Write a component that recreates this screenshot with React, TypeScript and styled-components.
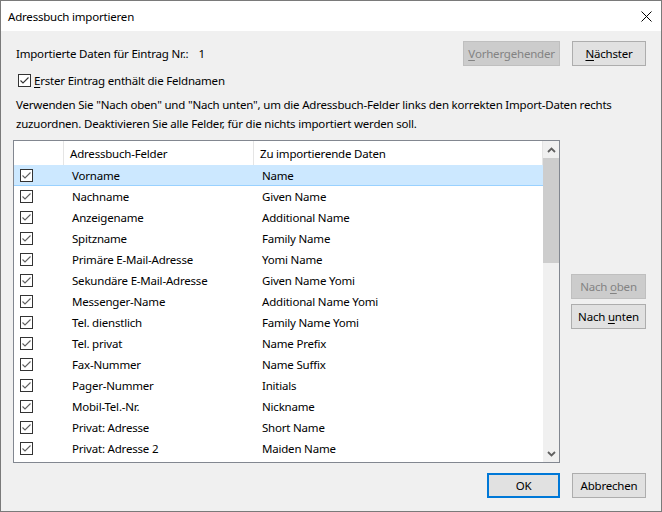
import React from "react";
import styled, { createGlobalStyle } from "styled-components";

const GlobalStyle = createGlobalStyle`
  html, body { margin: 0; padding: 0; background: #ffffff; }
  body { font-family: "Noto Sans", "Open Sans", sans-serif; font-size: 11.5px; letter-spacing: -0.2px; color: #000; }
  * { box-sizing: border-box; }
`;

const Window = styled.div`
  width: 662px;
  height: 512px;
  border: 1px solid #7a7a7a;
  display: flex;
  flex-direction: column;
  overflow: hidden;
`;

const TitleBar = styled.div`
  height: 30px;
  background: #ffffff;
  display: flex;
  align-items: center;
  justify-content: space-between;
  padding: 0 9px 0 7px;
  flex-shrink: 0;
`;

const Title = styled.span`
  color: #000;
`;

const Body = styled.div`
  flex: 1;
  background: #f0f0f0;
  padding: 10px 15px 0 12px;
  display: flex;
  flex-direction: column;
`;

const TopRow = styled.div`
  height: 25px;
  display: flex;
  align-items: center;
`;

const Label = styled.span`
  margin-left: 3px;
  white-space: nowrap;
`;

const Value = styled.span`
  margin-left: 10px;
`;

const Spacer = styled.div`
  flex: 1;
`;

const Button = styled.button<{ $w: number; $disabled?: boolean; $default?: boolean }>`
  width: ${(p) => p.$w}px;
  height: 25px;
  padding: 0;
  font-family: inherit;
  font-size: 11.5px;
  letter-spacing: -0.2px;
  color: ${(p) => (p.$disabled ? "#838383" : "#000")};
  background: ${(p) => (p.$disabled ? "#cccccc" : "#e1e1e1")};
  border: ${(p) =>
    p.$default ? "2px solid #0078d7" : p.$disabled ? "1px solid #bfbfbf" : "1px solid #adadad"};
  display: flex;
  align-items: center;
  justify-content: center;
  cursor: default;
`;

const ButtonGroup = styled.div<{ $gap: number }>`
  display: flex;
  gap: ${(p) => p.$gap}px;
`;

const U = styled.span`
  text-decoration: underline;
  text-underline-offset: 2px;
`;

const CheckRow = styled.div`
  margin-top: 7px;
  height: 14px;
  display: flex;
  align-items: center;
  padding-left: 5px;
  gap: 3px;
`;

const Box = styled.span`
  width: 13px;
  height: 13px;
  border: 1px solid #333333;
  background: #ffffff;
  display: inline-flex;
  align-items: center;
  justify-content: center;
  flex-shrink: 0;
`;

const Paragraph = styled.p`
  margin: 8px 0 0 3px;
  line-height: 19px;
`;

const MainRow = styled.div`
  margin-top: 7px;
  display: flex;
  gap: 11px;
`;

const ListBox = styled.div`
  width: 547px;
  height: 323px;
  border: 1px solid #828790;
  background: #ffffff;
  display: flex;
`;

const Table = styled.div`
  flex: 1;
  overflow: hidden;
  display: flex;
  flex-direction: column;
`;

const HeaderRow = styled.div`
  height: 24px;
  display: grid;
  grid-template-columns: 50px 190px 1fr;
  flex-shrink: 0;
  border-right: 1px solid #e5e5e5;
`;

const HeaderCell = styled.div`
  display: flex;
  align-items: center;
  padding-left: 6px;
  border-right: 1px solid #e5e5e5;
  &:last-child { border-right: none; }
`;

const Row = styled.div<{ $selected?: boolean }>`
  height: 21px;
  flex-shrink: 0;
  display: grid;
  grid-template-columns: 50px 190px 1fr;
  align-items: center;
  background: ${(p) => (p.$selected ? "#cce8ff" : "transparent")};
  border-bottom: 1px solid ${(p) => (p.$selected ? "#99d1ff" : "transparent")};
`;

const CheckCell = styled.div`
  padding-left: 6px;
  display: flex;
  align-items: center;
`;

const TextCell = styled.div`
  padding-left: 8px;
  white-space: nowrap;
  overflow: hidden;
  line-height: 19px;
`;

const ScrollBar = styled.div`
  width: 16px;
  background: #f0f0f0;
  display: flex;
  flex-direction: column;
  flex-shrink: 0;
`;

const Arrow = styled.div`
  height: 17px;
  display: flex;
  align-items: center;
  justify-content: center;
  flex-shrink: 0;
`;

const Track = styled.div`
  flex: 1;
  display: flex;
  flex-direction: column;
`;

const Thumb = styled.div`
  height: 105px;
  background: #cdcdcd;
`;

const SideColumn = styled.div`
  display: flex;
  flex-direction: column;
  gap: 5px;
  padding-top: 134px;
`;

const BottomRow = styled.div`
  margin-top: 10px;
  display: flex;
  justify-content: flex-end;
  gap: 12px;
`;

const Check = ({ color = "#5f5f5f" }: { color?: string }) => (
  <svg width="11" height="11" viewBox="0 0 11 11">
    <polyline points="1.5,5.5 4,8 9.5,2.5" fill="none" stroke={color} strokeWidth="1.1" />
  </svg>
);

const CheckBox = ({ color }: { color?: string }) => (
  <Box>
    <Check color={color} />
  </Box>
);

const rows: [string, string][] = [
  ["Vorname", "Name"],
  ["Nachname", "Given Name"],
  ["Anzeigename", "Additional Name"],
  ["Spitzname", "Family Name"],
  ["Primäre E-Mail-Adresse", "Yomi Name"],
  ["Sekundäre E-Mail-Adresse", "Given Name Yomi"],
  ["Messenger-Name", "Additional Name Yomi"],
  ["Tel. dienstlich", "Family Name Yomi"],
  ["Tel. privat", "Name Prefix"],
  ["Fax-Nummer", "Name Suffix"],
  ["Pager-Nummer", "Initials"],
  ["Mobil-Tel.-Nr.", "Nickname"],
  ["Privat: Adresse", "Short Name"],
  ["Privat: Adresse 2", "Maiden Name"],
];

export default function App() {
  return (
    <>
      <GlobalStyle />
      <Window>
        <TitleBar>
          <Title>Adressbuch importieren</Title>
          <svg width="11" height="11" viewBox="0 0 11 11">
            <path d="M0.5 0.5 L10.5 10.5 M10.5 0.5 L0.5 10.5" stroke="#000" strokeWidth="1" fill="none" />
          </svg>
        </TitleBar>
        <Body>
          <TopRow>
            <Label>Importierte Daten für Eintrag Nr.:</Label>
            <Value>1</Value>
            <Spacer />
            <ButtonGroup $gap={12}>
              <Button $w={97} $disabled>
                <U>V</U>orhergehender
              </Button>
              <Button $w={74}>
                <U>N</U>ächster
              </Button>
            </ButtonGroup>
          </TopRow>
          <CheckRow>
            <CheckBox color="#333333" />
            <span>
              <U>E</U>rster Eintrag enthält die Feldnamen
            </span>
          </CheckRow>
          <Paragraph>
            Verwenden Sie "Nach oben" und "Nach unten", um die Adressbuch-Felder links den korrekten Import-Daten rechts
            zuzuordnen. Deaktivieren Sie alle Felder, für die nichts importiert werden soll.
          </Paragraph>
          <MainRow>
            <ListBox>
              <Table>
                <HeaderRow>
                  <HeaderCell />
                  <HeaderCell>Adressbuch-Felder</HeaderCell>
                  <HeaderCell>Zu importierende Daten</HeaderCell>
                </HeaderRow>
                {rows.map(([a, b], i) => (
                  <Row key={a} $selected={i === 0}>
                    <CheckCell>
                      <CheckBox />
                    </CheckCell>
                    <TextCell>{a}</TextCell>
                    <TextCell>{b}</TextCell>
                  </Row>
                ))}
              </Table>
              <ScrollBar>
                <Arrow>
                  <svg width="9" height="6" viewBox="0 0 9 6">
                    <polyline points="1,5 4.5,1.5 8,5" fill="none" stroke="#606060" strokeWidth="1.8" />
                  </svg>
                </Arrow>
                <Track>
                  <Thumb />
                </Track>
                <Arrow>
                  <svg width="9" height="6" viewBox="0 0 9 6">
                    <polyline points="1,1 4.5,4.5 8,1" fill="none" stroke="#606060" strokeWidth="1.8" />
                  </svg>
                </Arrow>
              </ScrollBar>
            </ListBox>
            <SideColumn>
              <Button $w={75} $disabled>
                Nach&nbsp;<U>o</U>ben
              </Button>
              <Button $w={75}>
                Nach&nbsp;<U>u</U>nten
              </Button>
            </SideColumn>
          </MainRow>
          <BottomRow>
            <Button $w={73} $default>
              OK
            </Button>
            <Button $w={74}>Abbrechen</Button>
          </BottomRow>
        </Body>
      </Window>
    </>
  );
}
